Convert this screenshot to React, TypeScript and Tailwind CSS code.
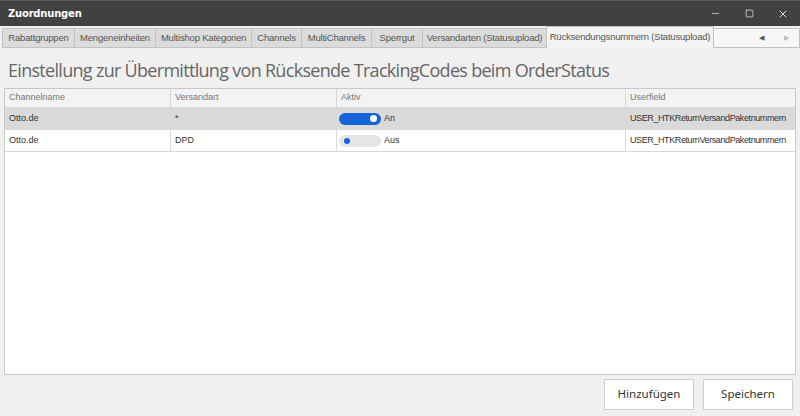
import { Minus, Square, X } from "lucide-react";

const tabs = [
  { label: "Rabattgruppen", w: "w-[73px]" },
  { label: "Mengeneinheiten", w: "w-[82px]" },
  { label: "Multishop Kategorien", w: "w-[97px]" },
  { label: "Channels", w: "w-[51px]" },
  { label: "MultiChannels", w: "w-[71px]" },
  { label: "Sperrgut", w: "w-[52px]" },
  { label: "Versandarten (Statusupload)", w: "w-[125px]" },
];

const rows = [
  { channel: "Otto.de", versand: "*", on: true, userfield: "USER_HTKReturnVersandPaketnummern" },
  { channel: "Otto.de", versand: "DPD", on: false, userfield: "USER_HTKReturnVersandPaketnummern" },
];

function Toggle({ on }: { on: boolean }) {
  return (
    <div className="flex items-center gap-[3px]">
      {on ? (
        <div className="w-[42px] h-[12px] rounded-full bg-[#1565d8] flex items-center justify-end pr-[4px]">
          <div className="w-[7px] h-[7px] rounded-full bg-white" />
        </div>
      ) : (
        <div className="w-[42px] h-[12px] rounded-full bg-[#e6e6e6] flex items-center pl-[5px]">
          <div className="w-[6px] h-[6px] rounded-full bg-[#1565d8]" />
        </div>
      )}
      <span>{on ? "An" : "Aus"}</span>
    </div>
  );
}

export default function App() {
  return (
    <div className="w-[800px] h-[416px] flex flex-col bg-[#f0f0f0] overflow-hidden font-['Noto_Sans',sans-serif]">
      {/* Titelleiste */}
      <div className="h-[26px] bg-[#414141] border-t border-[#5a5a5a] flex items-center justify-between shrink-0">
        <span className="pl-[8px] text-white text-[10px] font-bold font-['DejaVu_Sans',sans-serif] tracking-[-0.2px]">Zuordnungen</span>
        <div className="flex items-center text-[#e0e0e0]">
          <div className="w-[34px] flex justify-center"><Minus className="w-[11px] h-[11px]" strokeWidth={1.5} /></div>
          <div className="w-[34px] flex justify-center"><Square className="w-[9px] h-[9px]" strokeWidth={2} /></div>
          <div className="w-[34px] flex justify-center"><X className="w-[12px] h-[12px]" strokeWidth={2} /></div>
        </div>
      </div>

      {/* Tabs */}
      <div className="h-[22px] flex items-end pl-[2px] shrink-0 bg-[#f0f0f0] whitespace-nowrap font-['Liberation_Sans',sans-serif] text-[9.5px] text-[#555] tracking-[-0.2px]">
        {tabs.map((t) => (
          <div
            key={t.label}
            className={`${t.w} h-[20px] bg-[#dcdcdc] border border-[#c2c2c2] -ml-px first:ml-0 flex items-center justify-center`}
          >
            {t.label}
          </div>
        ))}
        <div className="w-[168px] h-[22px] bg-[#f3f3f3] border border-b-0 border-[#c2c2c2] -ml-px flex items-center justify-center">
          Rücksendungsnummern (Statusupload)
        </div>
        <div className="flex-1 h-[20px] border border-l-0 border-[#c2c2c2] bg-[#f7f7f7] flex items-center justify-end gap-[20px] pr-[10px] text-[7px]">
          <span className="text-[#555]">◀</span>
          <span className="text-[#bbb]">▶</span>
        </div>
      </div>

      {/* Inhalt */}
      <div className="flex-1 flex flex-col px-[4px] pb-[3px]">
        <h1 className="h-[38px] flex items-center pl-[4px] pt-[6px] text-[18px] text-[#666] font-['Open_Sans',sans-serif] tracking-[-0.7px]">
          Einstellung zur Übermittlung von Rücksende TrackingCodes beim OrderStatus
        </h1>

        <div className="mt-[2px] h-[287px] bg-white border border-[#c8c8c8] text-[9px] text-[#333] whitespace-nowrap font-['Liberation_Sans',sans-serif]">
          <div className="grid grid-cols-[166px_166px_289px_1fr] h-[19px] bg-[#f3f3f3] border-b border-[#d8d8d8] text-[#777]">
            <div className="flex items-center pl-[4px] border-r border-[#d8d8d8]">Channelname</div>
            <div className="flex items-center pl-[4px] border-r border-[#d8d8d8]">Versandart</div>
            <div className="flex items-center pl-[4px] border-r border-[#d8d8d8]">Aktiv</div>
            <div className="flex items-center pl-[4px]">Userfield</div>
          </div>
          {rows.map((r, i) => (
            <div
              key={i}
              className={`grid grid-cols-[166px_166px_289px_1fr] h-[22px] border-b border-[#d8d8d8] ${i === 0 ? "bg-[#dadada]" : "bg-white"}`}
            >
              <div className="flex items-center pl-[4px] border-r border-[#d8d8d8]">{r.channel}</div>
              <div className="flex items-center pl-[4px] border-r border-[#d8d8d8]">{r.versand}</div>
              <div className="flex items-center pl-[2px] border-r border-[#d8d8d8]"><Toggle on={r.on} /></div>
              <div className="flex items-center pl-[4px] tracking-[-0.4px]">{r.userfield}</div>
            </div>
          ))}
        </div>

        <div className="flex-1 flex items-center justify-end gap-[9px] pr-[3px]">
          <button className="w-[90px] h-[31px] bg-white border border-[#cfcfcf] text-[11.5px] text-[#333]">Hinzufügen</button>
          <button className="w-[90px] h-[31px] bg-white border border-[#cfcfcf] text-[11.5px] text-[#333]">Speichern</button>
        </div>
      </div>
    </div>
  );
}
